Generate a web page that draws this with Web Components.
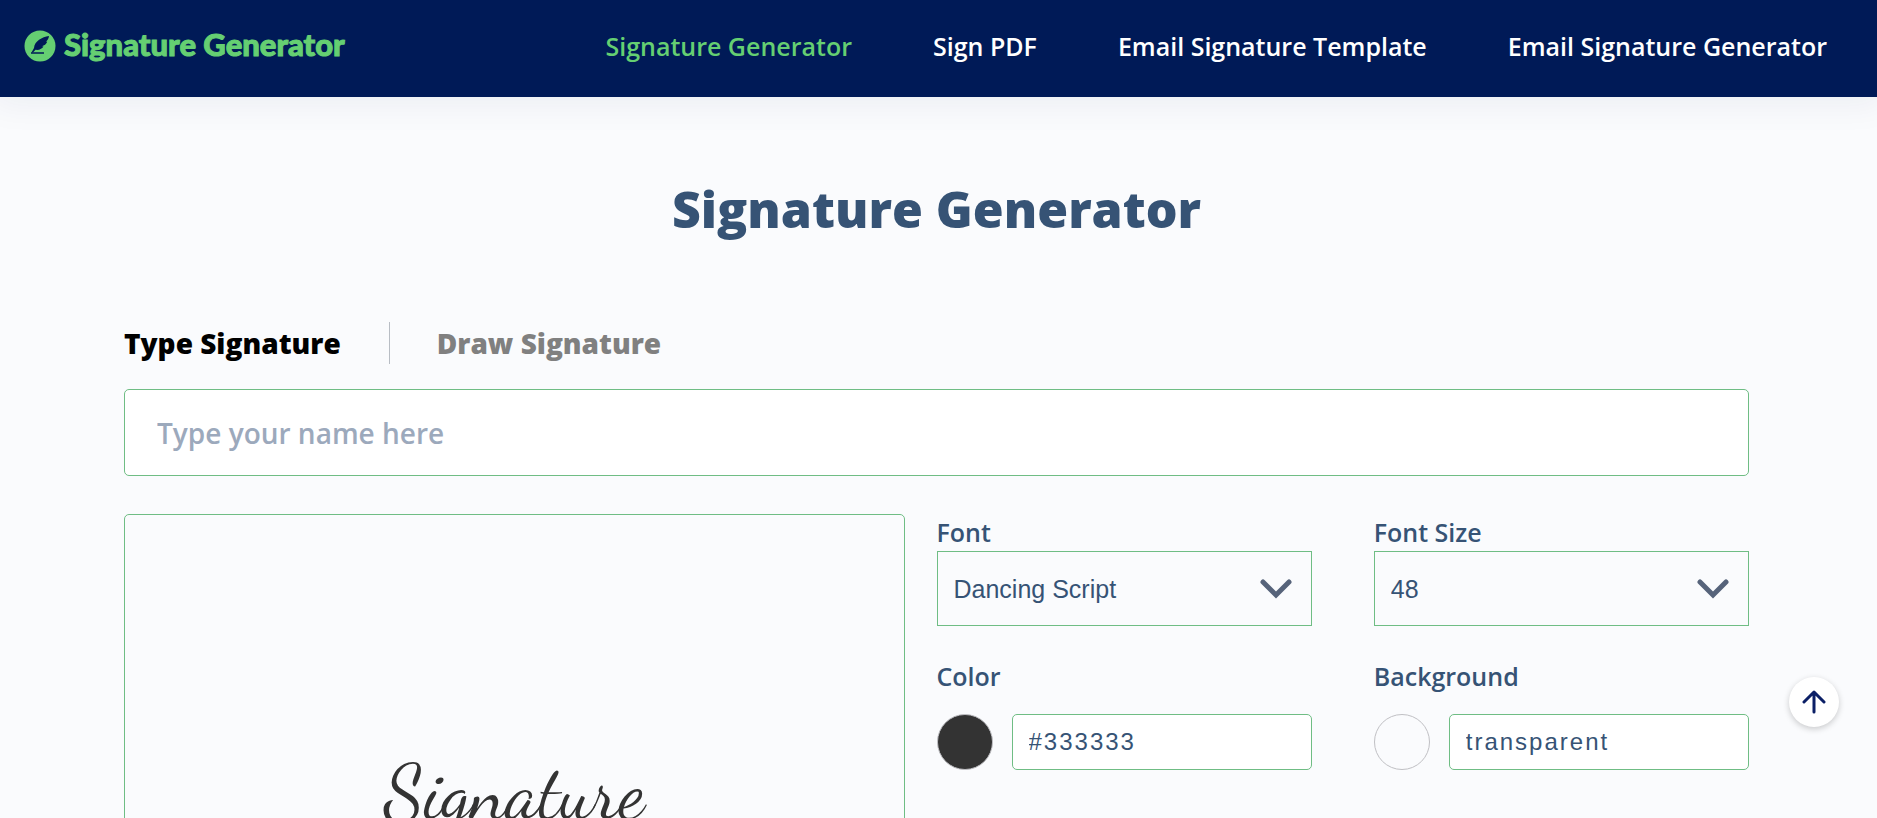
<!DOCTYPE html>
<html lang="en">
<head>
  <meta charset="utf-8">
  <meta name="viewport" content="width=device-width, initial-scale=1">
  <title>Signature Generator</title>
  <style>
    body {
      margin: 0;
      background: #fafbfd;
      color: #365375;
      font-family: "Open Sans", "Noto Sans", sans-serif;
      --green: #6fbd84;
      --navy: #001a57;
    }
  </style>
</head>
<body>
  <site-header>
    <nav-link active>Signature Generator</nav-link>
    <nav-link>Sign PDF</nav-link>
    <nav-link>Email Signature Template</nav-link>
    <nav-link>Email Signature Generator</nav-link>
  </site-header>

  <signature-maker>
    <span slot="title">Signature Generator</span>
    <signature-preview slot="preview">Signature</signature-preview>
    <select-field slot="options" label="Font" value="Dancing Script"></select-field>
    <select-field slot="options" label="Font Size" value="48"></select-field>
    <color-field slot="options" label="Color" value="#333333"></color-field>
    <color-field slot="options" label="Background" value="transparent"></color-field>
  </signature-maker>

  <scroll-top></scroll-top>

  <script>
    class SiteHeader extends HTMLElement {
      constructor() {
        super();
        this.shadowDOM = this.attachShadow({ mode: 'open' });
      }

      connectedCallback() {
        this.shadowDOM.innerHTML = `
          <style>
            :host {
              display: block;
              background: var(--navy);
              box-shadow: 0 0 32px 8px rgba(0, 26, 87, 0.06);
            }

            header {
              display: flex;
              align-items: center;
              justify-content: space-between;
              min-height: 97px;
              padding: 0 50px 6px 24px;
              box-sizing: border-box;
            }

            .logo {
              display: flex;
              align-items: flex-start;
              gap: 8px;
              color: #65cf72;
              font: 900 31px/28px "Lato Black", Lato, sans-serif;
              text-decoration: none;
              white-space: nowrap;
              -webkit-text-stroke: 1px #65cf72;
            }

            .logo svg {
              display: block;
              flex: none;
            }

            nav {
              display: flex;
              gap: 81px;
            }
          </style>

          <header>
            <a class="logo" href="#">
              <svg width="32" height="32" viewBox="0 0 32 32" aria-hidden="true">
                <circle cx="16" cy="16" r="15.5" fill="#65cf72"/>
                <path d="M25 6 C18 7 10.500 11 10 18 L7.500 22.500 H9 L11.500 19.800 C15 20.500 18.500 18.500 19.500 16.500 L18 16.200 C20 15.800 22.500 14 23.200 11.800 L22 11.400 C23.600 10.500 24.700 8.500 25 6Z" fill="#001a57"/>
                <path d="M7 23 H20" stroke="#001a57" stroke-width="1.500"/>
              </svg>
              <span>Signature Generator</span>
            </a>
            <nav><slot></slot></nav>
          </header>
        `;
      }
    }

    class NavLink extends HTMLElement {
      constructor() {
        super();
        this.shadowDOM = this.attachShadow({ mode: 'open' });
      }

      connectedCallback() {
        this.shadowDOM.innerHTML = `
          <style>
            :host {
              display: block;
              color: #fff;
            }

            :host([active]) {
              color: #65cf72;
            }

            a {
              display: block;
              color: inherit;
              font-size: 25px;
              font-weight: 600;
              line-height: 36px;
              text-decoration: none;
              white-space: nowrap;
            }
          </style>
          <a href="#"><slot></slot></a>
        `;
      }
    }

    class SignatureMaker extends HTMLElement {
      constructor() {
        super();
        this.shadowDOM = this.attachShadow({ mode: 'open' });
      }

      connectedCallback() {
        this.shadowDOM.innerHTML = `
          <style>
            :host {
              display: block;
              max-width: 1626px;
              margin: 0 auto;
              padding: 74px 128px 64px 124px;
            }

            h1 {
              margin: 0 0 75px;
              font-size: 50px;
              font-weight: 800;
              line-height: 76px;
              text-align: center;
            }

            .tabs {
              display: flex;
              align-items: center;
              margin-bottom: 25px;
            }

            .tabs button {
              padding: 0;
              border: 0;
              background: none;
              color: #808080;
              font: inherit;
              font-size: 28px;
              font-weight: 800;
              line-height: 42px;
              cursor: pointer;
            }

            .tabs button[aria-selected="true"] {
              color: #000;
            }

            .tabs button + button {
              margin-left: 48px;
              padding-left: 47px;
              border-left: 1px solid #b8bdc4;
            }

            .name {
              display: block;
              width: 100%;
              height: 87px;
              padding: 0 32px;
              box-sizing: border-box;
              border: 1px solid var(--green);
              border-radius: 5px;
              background: #fff;
              color: inherit;
              font: 600 28px/40px "Open Sans", sans-serif;
            }

            .name::placeholder {
              color: #9ca9bc;
              opacity: 1;
            }

            .work {
              display: grid;
              grid-template-columns: minmax(0, 781fr) minmax(0, 813fr);
              gap: 32px;
              margin-top: 38px;
            }

            .options {
              display: grid;
              grid-template-columns: repeat(2, minmax(0, 1fr));
              align-content: start;
              gap: 32px 62px;
            }
          </style>

          <h1><slot name="title"></slot></h1>
          <div class="tabs" role="tablist">
            <button type="button" role="tab" aria-selected="true">Type Signature</button>
            <button type="button" role="tab" aria-selected="false">Draw Signature</button>
          </div>
          <input class="name" type="text" placeholder="Type your name here" aria-label="Your name">
          <div class="work">
            <slot name="preview"></slot>
            <div class="options"><slot name="options"></slot></div>
          </div>
        `;
      }
    }

    class SignaturePreview extends HTMLElement {
      constructor() {
        super();
        this.shadowDOM = this.attachShadow({ mode: 'open' });
      }

      connectedCallback() {
        this.shadowDOM.innerHTML = `
          <style>
            :host {
              display: flex;
              align-items: center;
              justify-content: center;
              min-height: 558px;
              box-sizing: border-box;
              border: 1px solid var(--green);
              border-radius: 5px;
              color: #333;
              font: 75px/96px "Dancing Script", cursive;
            }
          </style>
          <slot></slot>
        `;
      }
    }

    class SelectField extends HTMLElement {
      constructor() {
        super();
        this.shadowDOM = this.attachShadow({ mode: 'open' });
      }

      connectedCallback() {
        const label = this.getAttribute('label');
        const value = this.getAttribute('value');

        this.shadowDOM.innerHTML = `
          <style>
            :host {
              display: block;
            }

            label {
              display: block;
              font-size: 25px;
              font-weight: 600;
              line-height: 37px;
            }

            .box {
              display: grid;
              align-items: center;
            }

            select, svg {
              grid-area: 1 / 1;
            }

            select {
              width: 100%;
              height: 75px;
              padding: 0 64px 0 16px;
              box-sizing: border-box;
              appearance: none;
              border: 1px solid var(--green);
              border-radius: 0;
              background: transparent;
              color: inherit;
              font: 25px/32px "Liberation Sans", Arial, sans-serif;
            }

            svg {
              justify-self: end;
              margin-right: 20px;
              pointer-events: none;
            }
          </style>
          <label for="field">${label}</label>
          <div class="box">
            <select id="field"><option>${value}</option></select>
            <svg width="32" height="20" viewBox="0 0 32 20" fill="none" stroke="#56637a" stroke-width="5" stroke-linecap="round" aria-hidden="true">
              <path d="M3 3 L16 16 L29 3"/>
            </svg>
          </div>
        `;
      }
    }

    class ColorField extends HTMLElement {
      constructor() {
        super();
        this.shadowDOM = this.attachShadow({ mode: 'open' });
      }

      connectedCallback() {
        const label = this.getAttribute('label');
        const value = this.getAttribute('value');

        this.shadowDOM.innerHTML = `
          <style>
            :host {
              display: block;
            }

            label {
              display: block;
              margin-bottom: 19px;
              font-size: 25px;
              font-weight: 600;
              line-height: 37px;
            }

            .row {
              display: flex;
              gap: 19px;
            }

            .swatch {
              flex: none;
              width: 56px;
              height: 56px;
              padding: 0;
              box-sizing: border-box;
              border: 1px solid #c0c0c4;
              border-radius: 50%;
              background: ${value};
            }

            input {
              flex: 1;
              min-width: 0;
              height: 56px;
              padding: 0 16px;
              box-sizing: border-box;
              border: 1px solid var(--green);
              border-radius: 5px;
              background: #fff;
              color: inherit;
              font: 24px/32px "Liberation Sans", Arial, sans-serif;
              letter-spacing: 2px;
            }
          </style>
          <label for="field">${label}</label>
          <div class="row">
            <button class="swatch" type="button" aria-label="Pick ${label}"></button>
            <input id="field" type="text" value="${value}">
          </div>
        `;
      }
    }

    class ScrollTop extends HTMLElement {
      constructor() {
        super();
        this.shadowDOM = this.attachShadow({ mode: 'open' });
      }

      connectedCallback() {
        this.shadowDOM.innerHTML = `
          <style>
            :host {
              position: fixed;
              right: 38px;
              bottom: 91px;
            }

            button {
              display: grid;
              place-items: center;
              width: 50px;
              height: 50px;
              padding: 0;
              border: 0;
              border-radius: 50%;
              background: #fff;
              box-shadow: 0 2px 6px rgba(0, 0, 0, 0.2);
              cursor: pointer;
            }
          </style>
          <button type="button" aria-label="Back to top">
            <svg width="24" height="24" viewBox="0 0 24 24" fill="none" stroke="#0b1f66" stroke-width="3" stroke-linecap="round" stroke-linejoin="round">
              <path d="M12 22 V2 M2 12 L12 2 L22 12"/>
            </svg>
          </button>
        `;
      }
    }

    customElements.define('site-header', SiteHeader);
    customElements.define('nav-link', NavLink);
    customElements.define('signature-maker', SignatureMaker);
    customElements.define('signature-preview', SignaturePreview);
    customElements.define('select-field', SelectField);
    customElements.define('color-field', ColorField);
    customElements.define('scroll-top', ScrollTop);
  </script>
</body>
</html>
